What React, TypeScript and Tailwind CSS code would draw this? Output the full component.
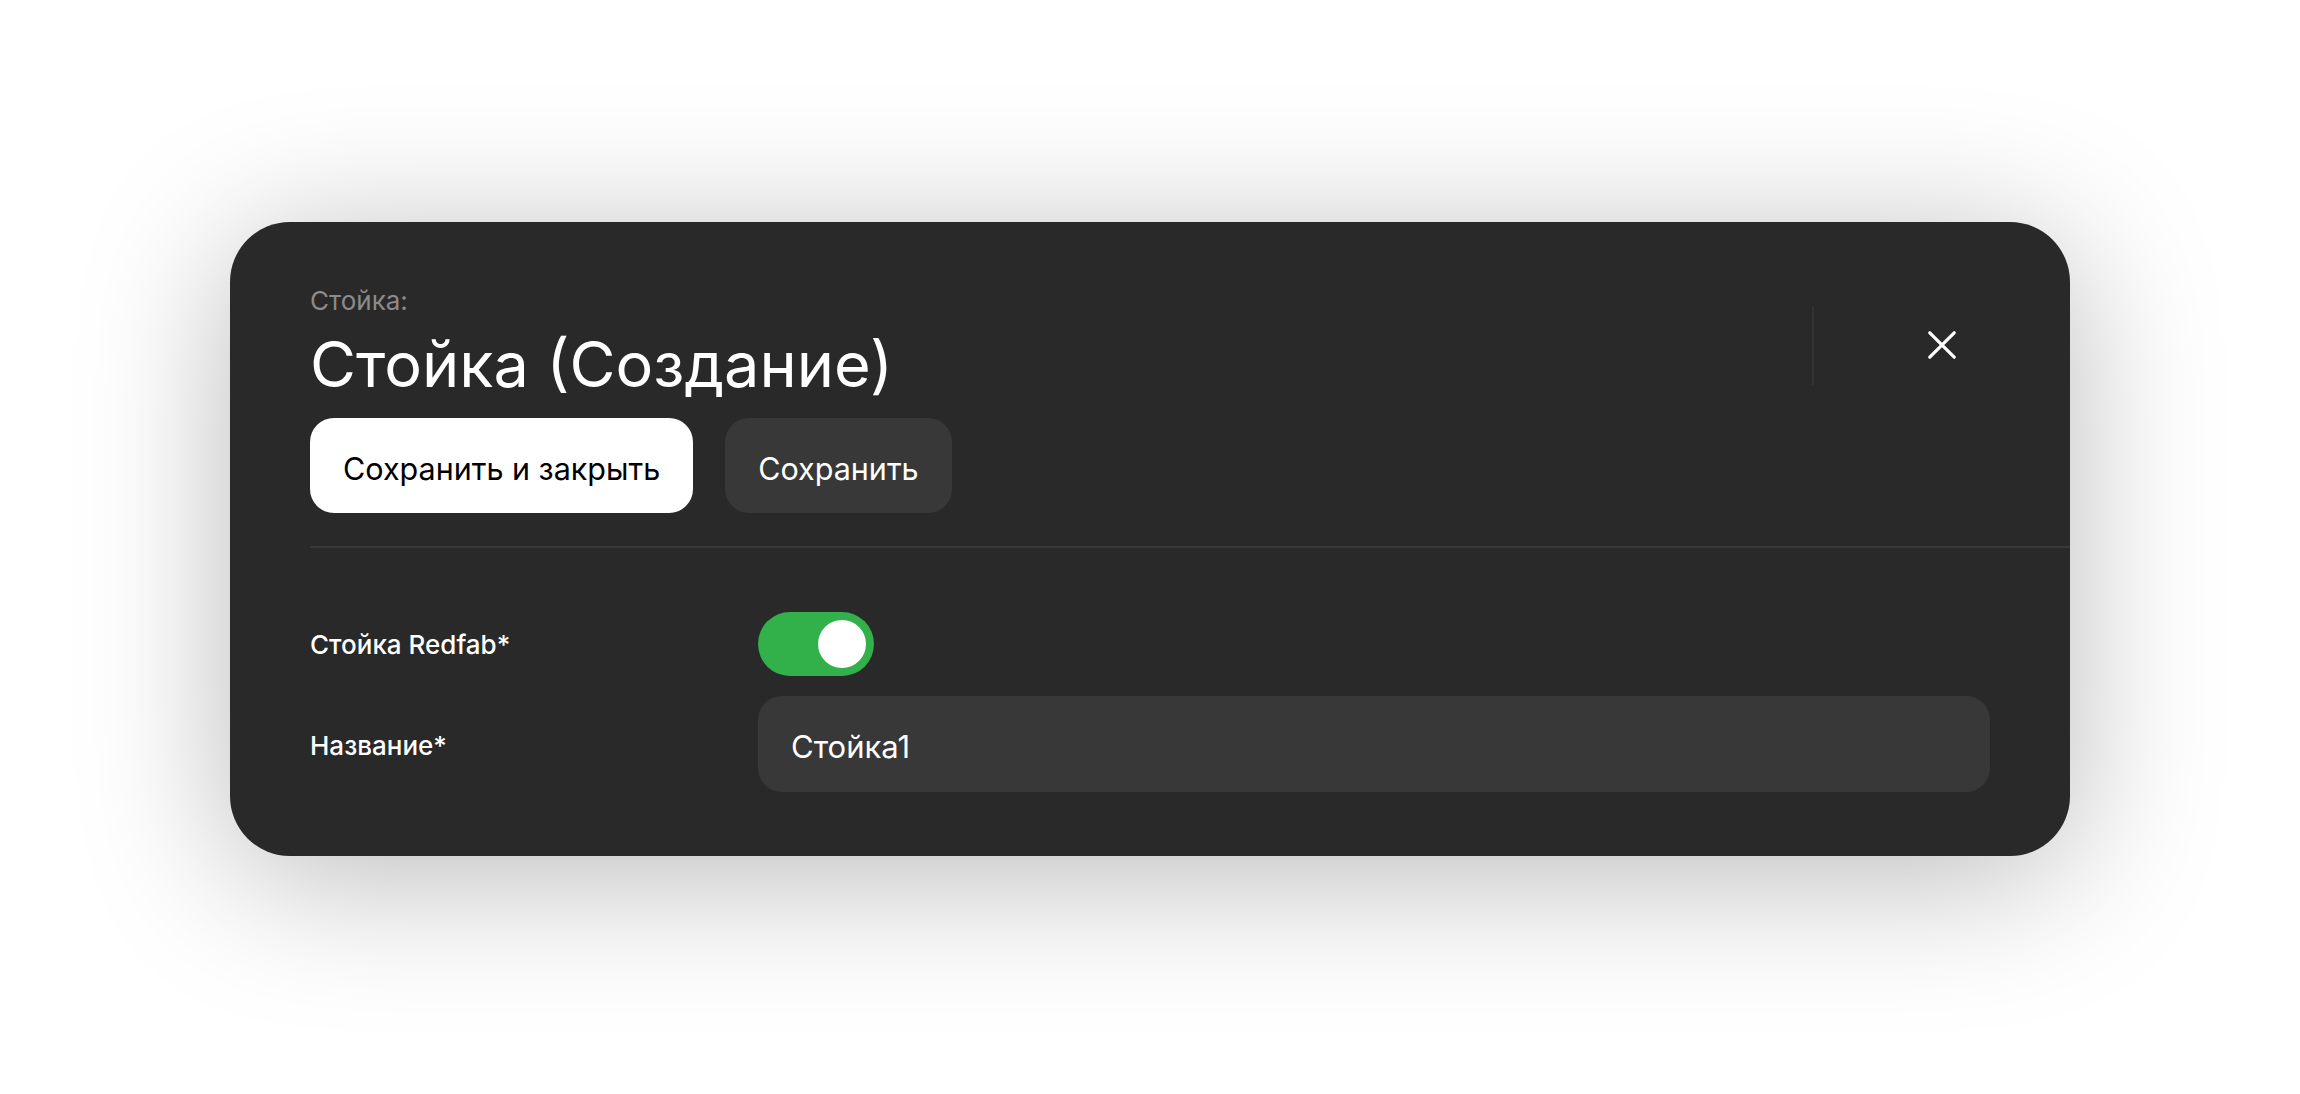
import React from "react";

function CloseIcon() {
  return (
    <svg width="28" height="28" viewBox="0 0 28 28" fill="none">
      <path d="M1.8 1.8L26.2 26.2M26.2 1.8L1.8 26.2" stroke="white" strokeWidth="3.2" strokeLinecap="round" />
    </svg>
  );
}

export default function App() {
  return (
    <div className="min-h-screen w-full bg-white [font-family:Inter,'Noto_Sans',sans-serif] pt-[222px] flex justify-center">
      <div className="w-[1840px] h-[634px] rounded-[60px] bg-[#292929] pt-[64px] pb-[64px] shadow-[0_20px_150px_rgba(0,0,0,0.28)] flex flex-col">
        <div className="px-[80px]">
          <div className="flex items-center">
            <div className="flex-1 flex flex-col">
              <div className="text-[26px] leading-[30px] text-[#8b8b8b]">Стойка:</div>
              <div className="mt-[17px] text-[63px] leading-[62px] text-white font-normal">
                Стойка (Создание)
              </div>
            </div>
            <div className="flex items-center pt-[9px]">
              <div className="w-[2px] h-[79px] bg-[#333333]" />
              <button className="ml-[80px] w-[96px] h-[79px] flex items-center justify-center">
                <CloseIcon />
              </button>
            </div>
          </div>
          <div className="mt-[23px] flex gap-[32px]">
            <button className="h-[95px] px-[33px] pt-[6px] rounded-[24px] bg-white text-black text-[30.5px] leading-[36px]">
              Сохранить и закрыть
            </button>
            <button className="h-[95px] px-[33px] pt-[6px] rounded-[24px] bg-[#383838] text-white text-[30.5px] leading-[36px]">
              Сохранить
            </button>
          </div>
        </div>
        <div className="mt-[33px] ml-[80px] h-[2px] bg-[#383838]" />
        <div className="px-[80px] mt-[64px] flex flex-col gap-[20px]">
          <div className="flex items-center">
            <div className="w-[448px] text-[26px] leading-[30px] font-medium text-white pt-[2px]">Стойка Redfab*</div>
            <div className="w-[116px] h-[64px] rounded-full bg-[#32b04a] flex items-center justify-end pr-[8px]">
              <div className="w-[48px] h-[48px] rounded-full bg-white" />
            </div>
          </div>
          <div className="flex items-center">
            <div className="w-[448px] text-[26px] leading-[30px] font-medium text-white pt-[4px]">Название*</div>
            <div className="flex-1 h-[96px] rounded-[24px] bg-[#383838] px-[33px] pt-[6px] flex items-center text-[31px] text-white">
              Стойка1
            </div>
          </div>
        </div>
      </div>
    </div>
  );
}
